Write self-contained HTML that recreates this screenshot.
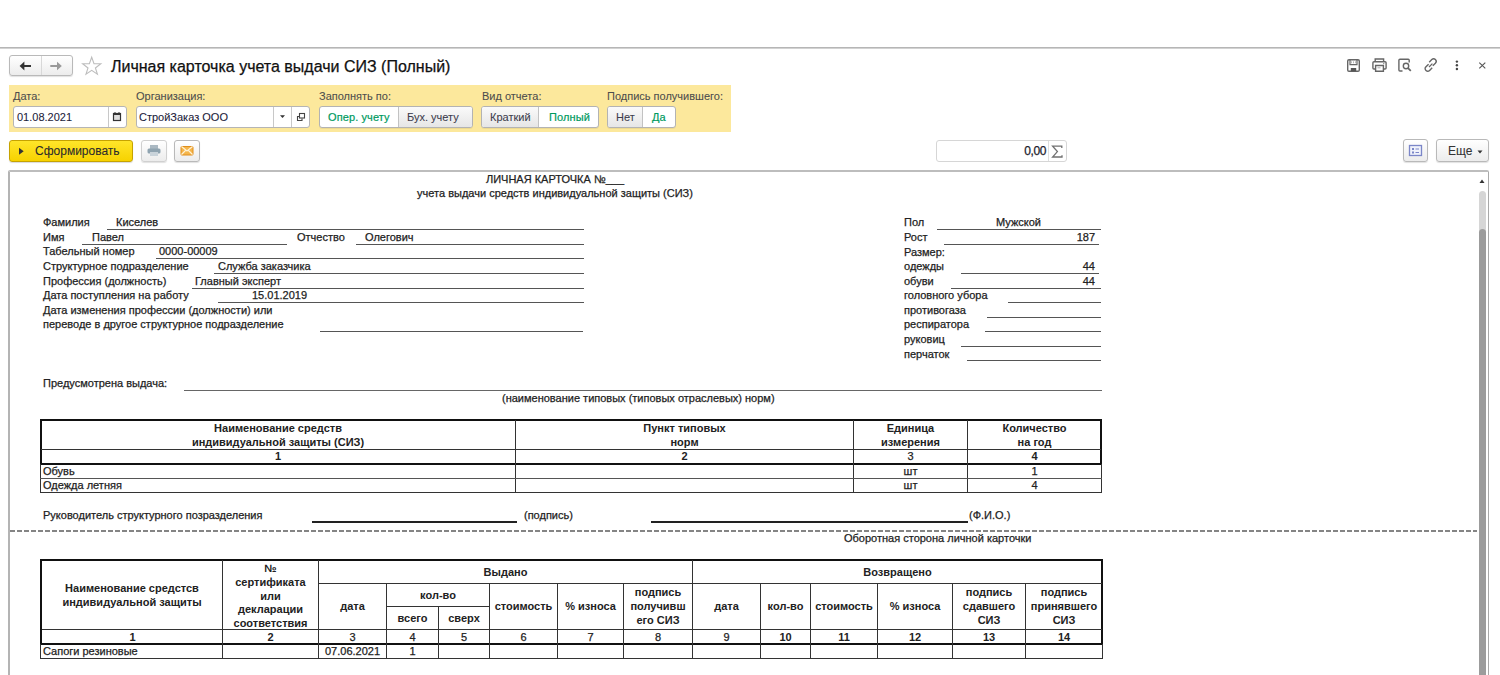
<!DOCTYPE html>
<html><head><meta charset="utf-8"><style>
html,body{margin:0;padding:0;background:#fff;}
body{width:1500px;height:675px;overflow:hidden;position:relative;font-family:"Liberation Sans",sans-serif;color:#222;}
.t11,.t12,.t16,.t10{position:absolute;white-space:pre;-webkit-text-stroke:0.25px currentColor;}
.t11{font-size:11px;line-height:13px;}
.t12{font-size:12px;line-height:14px;}
.t16{font-size:16px;line-height:18px;}
.t10{font-size:10px;line-height:12px;}
.ln{position:absolute;box-sizing:border-box;}
.btn{position:absolute;box-sizing:border-box;border:1px solid #b9b9b9;border-radius:3px;background:linear-gradient(#fff,#ececec);box-shadow:0 1px 1px rgba(0,0,0,.12);}
.inp{position:absolute;box-sizing:border-box;border:1px solid #b5b5b5;border-radius:3px;background:#fff;}
.lab{color:#4d4d4d;}
.sel{color:#009a5e;-webkit-text-stroke:0.2px currentColor !important;letter-spacing:0.1px;}
.rep{color:#1a1a1a;}
</style></head><body>
<div class="ln" style="left:0px;top:47px;width:1500px;height:1px;background:#b6b6b6"></div><div class="ln" style="left:0px;top:48px;width:1500px;height:1px;background:#d2d2d2"></div><div class="btn" style="left:9px;top:55px;width:64px;height:21px;"></div><div class="ln" style="left:41px;top:56px;width:1px;height:19px;background:#d8d8d8"></div><svg style="position:absolute;left:0;top:52px" width="110" height="28" viewBox="0 52 110 28">
<path d="M19.6 66 L24.4 61.6 V70.4 Z" fill="#333"/><rect x="24" y="65" width="7" height="2" fill="#333"/>
<path d="M61.8 66 L57 61.8 V70.2 Z" fill="#999"/><rect x="50.3" y="65" width="7.2" height="2" fill="#999"/>
<path d="M91.7 57.2 L94 63.6 L100.8 63.8 L95.4 68 L97.4 74.2 L91.7 70.4 L86 74.2 L88 68 L82.6 63.8 L89.4 63.6 Z" fill="none" stroke="#bdbdbd" stroke-width="1.1"/>
</svg><div class="t16 " style="left:111px;top:58px;color:#111;">Личная карточка учета выдачи СИЗ (Полный)</div><svg style="position:absolute;left:1340px;top:52px" width="160" height="28" viewBox="1340 52 160 28" fill="none" stroke="#666" stroke-width="1.4">
<path d="M1347.7 61 Q1347.7 59.7 1349 59.7 H1358 Q1359.3 59.7 1359.3 61 V70 Q1359.3 71.2 1358 71.2 H1349 Q1347.7 71.2 1347.7 70 Z"/>
<path d="M1350 59.7 V64.6 H1357 V59.7" stroke-width="1.2"/>
<path d="M1351.5 61.3 V63.3 M1353.5 61.3 V63.3 M1355.5 61.3 V63.3" stroke="#aaa" stroke-width="0.8"/>
<rect x="1350.8" y="68" width="5.4" height="3.4" fill="#555" stroke="none"/>
<path d="M1375.2 62 V59 H1383.6 V62"/>
<path d="M1375 69 H1374 Q1372.9 69 1372.9 68 V62.8 Q1372.9 61.8 1374 61.8 H1385 Q1386.1 61.8 1386.1 62.8 V68 Q1386.1 69 1385 69 H1384"/>
<path d="M1375.6 65.5 H1383.4 V71.2 H1375.6 Z"/>
<path d="M1377.5 67.8 H1380.5" stroke-width="0.8" stroke="#999"/>
<circle cx="1383.8" cy="63.6" r="0.6" fill="#666" stroke="none"/>
<path d="M1402.5 71 H1400 Q1398.9 71 1398.9 70 V60.3 Q1398.9 59.3 1400 59.3 H1408.2 Q1409.2 59.3 1409.2 60.3 V62.5"/>
<circle cx="1406" cy="66" r="2.7"/>
<path d="M1408 68.2 L1410.8 70.8" stroke-width="1.8"/>
<path d="M1428.6 64.2 L1426 66.8 Q1424.2 68.6 1426 70.4 Q1427.8 72.2 1429.6 70.4 L1432.2 67.8"/>
<path d="M1432.8 65.8 L1435.4 63.2 Q1437.2 61.4 1435.4 59.6 Q1433.6 57.8 1431.8 59.6 L1429.2 62.2"/>
<path d="M1429 67 L1432.4 63.6" stroke-width="1.3"/>
<circle cx="1456.9" cy="61.6" r="1.2" fill="#444" stroke="none"/>
<circle cx="1456.9" cy="65.3" r="1.2" fill="#444" stroke="none"/>
<circle cx="1456.9" cy="69" r="1.2" fill="#444" stroke="none"/>
<path d="M1479.3 62.6 L1485.3 68.4 M1485.3 62.6 L1479.3 68.4" stroke="#555" stroke-width="1.1"/>
</svg><div class="ln" style="left:9px;top:85px;width:722px;height:47px;background:#fce89c;"></div><div class="t11 lab" style="left:13px;top:90px;-webkit-text-stroke:0.08px currentColor;">Дата:</div><div class="t11 lab" style="left:136px;top:90px;-webkit-text-stroke:0.08px currentColor;">Организация:</div><div class="t11 lab" style="left:319px;top:90px;-webkit-text-stroke:0.08px currentColor;">Заполнять по:</div><div class="t11 lab" style="left:482px;top:90px;-webkit-text-stroke:0.08px currentColor;">Вид отчета:</div><div class="t11 lab" style="left:607px;top:90px;-webkit-text-stroke:0.08px currentColor;">Подпись получившего:</div><div class="inp" style="left:13px;top:106px;width:114px;height:22px;"></div><div class="ln" style="left:108px;top:107px;width:1px;height:20px;background:#c8c8c8"></div><div class="t11 " style="left:17px;top:111px;color:#1b1b3a;-webkit-text-stroke:0.08px currentColor;">01.08.2021</div><svg style="position:absolute;left:112px;top:111px" width="10" height="11" viewBox="0 0 10 11"><rect x="1.5" y="2.5" width="7" height="7" fill="#ddd" stroke="#333" stroke-width="1.2"/><rect x="1" y="2" width="8" height="2" fill="#333"/><rect x="2.5" y="1" width="1" height="1.5" fill="#333"/><rect x="6.5" y="1" width="1" height="1.5" fill="#333"/></svg><div class="inp" style="left:136px;top:106px;width:174px;height:22px;"></div><div class="ln" style="left:273px;top:107px;width:1px;height:20px;background:#c8c8c8"></div><div class="ln" style="left:291px;top:107px;width:1px;height:20px;background:#c8c8c8"></div><div class="t11 " style="left:139px;top:111px;color:#1b1b3a;-webkit-text-stroke:0.08px currentColor;">СтройЗаказ ООО</div><svg style="position:absolute;left:279px;top:114px" width="7" height="5" viewBox="0 0 7 5"><path d="M1 1.2 H6 L3.5 4 Z" fill="#333"/></svg><svg style="position:absolute;left:295px;top:111px" width="11" height="11" viewBox="0 0 11 11" fill="none" stroke="#444" stroke-width="1.1"><rect x="4.5" y="2.5" width="5" height="4.5"/><path d="M4 5.5 H2.5 V9.5 H7 V7.5"/></svg><div class="inp" style="left:319px;top:106px;width:154px;height:22px;border-color:#b3b3b3;box-shadow:0 1px 0 rgba(0,0,0,.06)"></div><div class="ln" style="left:398px;top:107px;width:74px;height:20px;background:linear-gradient(#fafafa,#e6e6e6);border-radius:0 2px 2px 0;"></div><div class="ln" style="left:398px;top:107px;width:1px;height:20px;background:#c2c2c2"></div><div class="t11 sel" style="left:328px;top:111px;-webkit-text-stroke:0.08px currentColor;">Опер. учету</div><div class="t11 " style="left:407px;top:111px;color:#3d3d4d;-webkit-text-stroke:0.08px currentColor;">Бух. учету</div><div class="inp" style="left:481px;top:106px;width:118px;height:22px;border-color:#b3b3b3;box-shadow:0 1px 0 rgba(0,0,0,.06)"></div><div class="ln" style="left:482px;top:107px;width:56px;height:20px;background:linear-gradient(#fafafa,#e6e6e6);border-radius:2px 0 0 2px;"></div><div class="ln" style="left:538px;top:107px;width:1px;height:20px;background:#c2c2c2"></div><div class="t11 " style="left:490px;top:111px;color:#3d3d4d;-webkit-text-stroke:0.08px currentColor;">Краткий</div><div class="t11 sel" style="left:549px;top:111px;-webkit-text-stroke:0.08px currentColor;">Полный</div><div class="inp" style="left:607px;top:106px;width:69px;height:22px;border-color:#b3b3b3;box-shadow:0 1px 0 rgba(0,0,0,.06)"></div><div class="ln" style="left:608px;top:107px;width:34px;height:20px;background:linear-gradient(#fafafa,#e6e6e6);border-radius:2px 0 0 2px;"></div><div class="ln" style="left:642px;top:107px;width:1px;height:20px;background:#c2c2c2"></div><div class="t11 " style="left:616px;top:111px;color:#3d3d4d;-webkit-text-stroke:0.08px currentColor;">Нет</div><div class="t11 sel" style="left:652px;top:111px;-webkit-text-stroke:0.08px currentColor;">Да</div><div class="ln" style="left:9px;top:140px;width:124px;height:22px;border:1px solid #c6a300;border-radius:3px;background:linear-gradient(#ffe52a,#f7d200);box-shadow:0 1px 1px rgba(0,0,0,.15)"></div><svg style="position:absolute;left:18px;top:147px" width="7" height="9" viewBox="0 0 7 9"><path d="M1 0.7 L5.7 4.2 L1 7.7 Z" fill="#333"/></svg><div class="t12 " style="left:35px;top:144px;color:#2b2b2b;-webkit-text-stroke:0.08px currentColor;">Сформировать</div><div class="btn" style="left:141px;top:140px;width:26px;height:22px;border-color:#d0d0d0"></div><svg style="position:absolute;left:146px;top:144px" width="16" height="13" viewBox="0 0 16 13"><rect x="4" y="1" width="8" height="4" fill="#aab8c2"/><rect x="1.5" y="4.5" width="13" height="5" rx="1.5" fill="#8fa3b0"/><rect x="4" y="8" width="8" height="4" fill="#c9d3da"/></svg><div class="btn" style="left:174px;top:140px;width:26px;height:22px;"></div><svg style="position:absolute;left:180px;top:145px" width="14" height="11" viewBox="0 0 14 11"><rect x="1" y="1.5" width="12" height="8.5" rx="0.8" fill="#f5b54a" stroke="#e08e1c" stroke-width="1"/><path d="M1.5 1.5 L7 6 L12.5 1.5 M1.5 9.5 L5.5 5.5 M12.5 9.5 L8.5 5.5" stroke="#fff3d6" stroke-width="1.1" fill="none"/></svg><div class="inp" style="left:936px;top:140px;width:131px;height:22px;border-color:#d6d6d6;"></div><div class="ln" style="left:1048px;top:141px;width:1px;height:20px;background:#dedede"></div><div class="t12" style="right:454px;top:144px;letter-spacing:-0.4px;color:#1c1c2c">0,00</div><svg style="position:absolute;left:1048px;top:140px" width="20" height="22" viewBox="1048 140 20 22"><path d="M1061.8 148 V146.2 H1052.6 L1057.4 151.6 L1052.6 157 H1062 V155.2" fill="none" stroke="#707070" stroke-width="1.3" stroke-linejoin="miter"/></svg><div class="btn" style="left:1403px;top:139px;width:25px;height:23px;"></div><svg style="position:absolute;left:1408px;top:144px" width="15" height="13" viewBox="0 0 15 13"><rect x="1.5" y="1.5" width="12" height="10" fill="#f0f2fb" stroke="#7b86c8" stroke-width="1.3"/><rect x="4" y="4" width="2" height="2" fill="#7b86c8"/><rect x="4" y="7.5" width="2" height="2" fill="#7b86c8"/><path d="M7.5 5 H11 M7.5 8.5 H11" stroke="#7b86c8" stroke-width="1.1"/></svg><div class="btn" style="left:1436px;top:139px;width:53px;height:23px;"></div><div class="t12 " style="left:1448px;top:144px;color:#333;-webkit-text-stroke:0.08px currentColor;">Еще</div><svg style="position:absolute;left:1477px;top:150px" width="6" height="4" viewBox="0 0 6 4"><path d="M0.5 0.5 H5.5 L3 3.5 Z" fill="#333"/></svg><div class="ln" style="left:8px;top:170px;width:1481px;height:520px;border:1px solid #a9a9a9;border-left:2px solid #b4b4b4;border-top:2px solid #bdbdbd;border-radius:2px 2px 0 0;"></div><svg style="position:absolute;left:1478px;top:178px" width="8" height="6" viewBox="0 0 8 6"><path d="M1.5 5 H6.5 L4 1.5 Z" fill="#333"/></svg><div class="ln" style="left:1479px;top:191px;width:7px;height:509px;background:#d6d6d6;border-radius:3.5px 3.5px 0 0;"></div><div class="ln" style="left:1479px;top:229px;width:7px;height:471px;background:#9c9c9c;border-radius:3.5px 3.5px 0 0;"></div><div class="t11" style="left:414px;width:282px;top:173px;text-align:center;">ЛИЧНАЯ КАРТОЧКА №___</div><div class="t11" style="left:414px;width:282px;top:187px;text-align:center;">учета выдачи средств индивидуальной защиты (СИЗ)</div><div class="t11 " style="left:43px;top:216px;">Фамилия</div><div class="ln" style="left:107px;top:229px;width:477px;height:1px;background:#555"></div><div class="t11 " style="left:116px;top:216px;">Киселев</div><div class="t11 " style="left:43px;top:231px;">Имя</div><div class="ln" style="left:82px;top:244px;width:205px;height:1px;background:#555"></div><div class="t11 " style="left:92px;top:231px;">Павел</div><div class="t11 " style="left:297px;top:231px;">Отчество</div><div class="ln" style="left:356px;top:244px;width:228px;height:1px;background:#555"></div><div class="t11 " style="left:365px;top:231px;">Олегович</div><div class="t11 " style="left:43px;top:245px;">Табельный номер</div><div class="ln" style="left:156px;top:258px;width:428px;height:1px;background:#555"></div><div class="t11 " style="left:159px;top:245px;">0000-00009</div><div class="t11 " style="left:43px;top:260px;">Структурное подразделение</div><div class="ln" style="left:214px;top:273px;width:370px;height:1px;background:#555"></div><div class="t11 " style="left:218px;top:260px;">Служба заказчика</div><div class="t11 " style="left:43px;top:275px;">Профессия (должность)</div><div class="ln" style="left:192px;top:288px;width:392px;height:1px;background:#555"></div><div class="t11 " style="left:195px;top:275px;">Главный эксперт</div><div class="t11 " style="left:43px;top:289px;">Дата поступления на работу</div><div class="ln" style="left:218px;top:302px;width:366px;height:1px;background:#555"></div><div class="t11 " style="left:252px;top:289px;">15.01.2019</div><div class="t11 " style="left:43px;top:304px;">Дата изменения профессии (должности) или</div><div class="t11 " style="left:43px;top:318px;">переводе в другое структурное подразделение</div><div class="ln" style="left:320px;top:331px;width:263px;height:1px;background:#555"></div><div class="t11 " style="left:904px;top:216px;">Пол</div><div class="ln" style="left:937px;top:229px;width:164px;height:1px;background:#555"></div><div class="t11 " style="left:996px;top:216px;">Мужской</div><div class="t11 " style="left:904px;top:231px;">Рост</div><div class="ln" style="left:944px;top:244px;width:155px;height:1px;background:#555"></div><div class="t11" style="right:405px;top:231px;text-align:right;">187</div><div class="t11 " style="left:904px;top:246px;">Размер:</div><div class="t11 " style="left:904px;top:260px;">одежды</div><div class="ln" style="left:961px;top:273px;width:138px;height:1px;background:#555"></div><div class="t11" style="right:405px;top:260px;text-align:right;">44</div><div class="t11 " style="left:904px;top:275px;">обуви</div><div class="ln" style="left:951px;top:288px;width:150px;height:1px;background:#555"></div><div class="t11" style="right:405px;top:275px;text-align:right;">44</div><div class="t11 " style="left:904px;top:289px;">головного убора</div><div class="ln" style="left:1008px;top:302px;width:93px;height:1px;background:#555"></div><div class="t11 " style="left:904px;top:304px;">противогаза</div><div class="ln" style="left:987px;top:317px;width:114px;height:1px;background:#555"></div><div class="t11 " style="left:904px;top:318px;">респиратора</div><div class="ln" style="left:985px;top:331px;width:116px;height:1px;background:#555"></div><div class="t11 " style="left:904px;top:333px;">руковиц</div><div class="ln" style="left:961px;top:346px;width:140px;height:1px;background:#555"></div><div class="t11 " style="left:904px;top:348px;">перчаток</div><div class="ln" style="left:967px;top:360px;width:134px;height:1px;background:#555"></div><div class="t11 " style="left:43px;top:377px;">Предусмотрена выдача:</div><div class="ln" style="left:184px;top:390px;width:918px;height:1px;background:#666"></div><div class="t11 " style="left:502px;top:392px;">(наименование типовых (типовых отраслевых) норм)</div><div class="ln" style="left:40px;top:419px;width:1062px;height:46px;border:2px solid #111;"></div><div class="ln" style="left:41px;top:449px;width:1060px;height:1px;background:#333"></div><div class="ln" style="left:515px;top:420px;width:1px;height:73px;background:#333"></div><div class="ln" style="left:853px;top:420px;width:1px;height:73px;background:#333"></div><div class="ln" style="left:967px;top:420px;width:1px;height:73px;background:#333"></div><div class="ln" style="left:40px;top:464px;width:1px;height:29px;background:#333"></div><div class="ln" style="left:1101px;top:464px;width:1px;height:29px;background:#333"></div><div class="ln" style="left:40px;top:478px;width:1062px;height:1px;background:#555"></div><div class="ln" style="left:40px;top:492px;width:1062px;height:1px;background:#333"></div><div class="t11" style="left:41px;width:474px;top:422px;text-align:center;font-weight:bold;-webkit-text-stroke:0;">Наименование средств</div><div class="t11" style="left:41px;width:474px;top:436px;text-align:center;font-weight:bold;-webkit-text-stroke:0;">индивидуальной защиты (СИЗ)</div><div class="t11" style="left:41px;width:474px;top:450px;text-align:center;font-weight:bold;-webkit-text-stroke:0;">1</div><div class="t11" style="left:516px;width:337px;top:422px;text-align:center;font-weight:bold;-webkit-text-stroke:0;">Пункт типовых</div><div class="t11" style="left:516px;width:337px;top:436px;text-align:center;font-weight:bold;-webkit-text-stroke:0;">норм</div><div class="t11" style="left:516px;width:337px;top:450px;text-align:center;font-weight:bold;-webkit-text-stroke:0;">2</div><div class="t11" style="left:854px;width:113px;top:422px;text-align:center;font-weight:bold;-webkit-text-stroke:0;">Единица</div><div class="t11" style="left:854px;width:113px;top:436px;text-align:center;font-weight:bold;-webkit-text-stroke:0;">измерения</div><div class="t11" style="left:854px;width:113px;top:450px;text-align:center;">3</div><div class="t11" style="left:968px;width:133px;top:422px;text-align:center;font-weight:bold;-webkit-text-stroke:0;">Количество</div><div class="t11" style="left:968px;width:133px;top:436px;text-align:center;font-weight:bold;-webkit-text-stroke:0;">на год</div><div class="t11" style="left:968px;width:133px;top:450px;text-align:center;font-weight:bold;-webkit-text-stroke:0;">4</div><div class="t11 " style="left:43px;top:465px;">Обувь</div><div class="t11 " style="left:43px;top:479px;">Одежда летняя</div><div class="t11" style="left:854px;width:113px;top:465px;text-align:center;">шт</div><div class="t11" style="left:968px;width:133px;top:465px;text-align:center;">1</div><div class="t11" style="left:854px;width:113px;top:479px;text-align:center;">шт</div><div class="t11" style="left:968px;width:133px;top:479px;text-align:center;">4</div><div class="t11 " style="left:43px;top:509px;">Руководитель структурного позразделения</div><div class="ln" style="left:312px;top:521px;width:205px;height:2px;background:#222"></div><div class="t11 " style="left:524px;top:509px;">(подпись)</div><div class="ln" style="left:651px;top:521px;width:317px;height:2px;background:#222"></div><div class="t11 " style="left:969px;top:509px;">(Ф.И.О.)</div><div class="ln" style="left:10px;top:530px;width:1467px;height:2px;opacity:.8;background:repeating-linear-gradient(90deg,#666 0 5px,transparent 5px 7px)"></div><div class="t11 " style="left:844px;top:532px;">Оборотная сторона личной карточки</div><div class="ln" style="left:40px;top:559px;width:1063px;height:86px;border-top:2px solid #111;border-left:2px solid #111;border-right:2px solid #111;border-bottom:2px solid #111;"></div><div class="ln" style="left:40px;top:644px;width:1px;height:15px;background:#333"></div><div class="ln" style="left:1102px;top:644px;width:1px;height:15px;background:#333"></div><div class="ln" style="left:40px;top:658px;width:1063px;height:1px;background:#333"></div><div class="ln" style="left:318px;top:583px;width:784px;height:1px;background:#333"></div><div class="ln" style="left:386px;top:606px;width:104px;height:1px;background:#333"></div><div class="ln" style="left:42px;top:629px;width:1060px;height:1px;background:#333"></div><div class="ln" style="left:222px;top:560px;width:1px;height:99px;background:#333"></div><div class="ln" style="left:318px;top:560px;width:1px;height:99px;background:#333"></div><div class="ln" style="left:692px;top:560px;width:1px;height:99px;background:#333"></div><div class="ln" style="left:386px;top:583px;width:1px;height:76px;background:#333"></div><div class="ln" style="left:489px;top:583px;width:1px;height:76px;background:#333"></div><div class="ln" style="left:557px;top:583px;width:1px;height:76px;background:#333"></div><div class="ln" style="left:623px;top:583px;width:1px;height:76px;background:#333"></div><div class="ln" style="left:760px;top:583px;width:1px;height:76px;background:#333"></div><div class="ln" style="left:810px;top:583px;width:1px;height:76px;background:#333"></div><div class="ln" style="left:877px;top:583px;width:1px;height:76px;background:#333"></div><div class="ln" style="left:952px;top:583px;width:1px;height:76px;background:#333"></div><div class="ln" style="left:1025px;top:583px;width:1px;height:76px;background:#333"></div><div class="ln" style="left:438px;top:606px;width:1px;height:53px;background:#333"></div><div class="t11" style="left:42px;width:180px;top:582px;text-align:center;font-weight:bold;-webkit-text-stroke:0;">Наименование средстсв</div><div class="t11" style="left:42px;width:180px;top:596px;text-align:center;font-weight:bold;-webkit-text-stroke:0;">индивидуальной защиты</div><div class="t11" style="left:223px;width:95px;top:562px;text-align:center;font-weight:bold;-webkit-text-stroke:0;">№</div><div class="t11" style="left:223px;width:95px;top:576px;text-align:center;font-weight:bold;-webkit-text-stroke:0;">сертификата</div><div class="t11" style="left:223px;width:95px;top:590px;text-align:center;font-weight:bold;-webkit-text-stroke:0;">или</div><div class="t11" style="left:223px;width:95px;top:603px;text-align:center;font-weight:bold;-webkit-text-stroke:0;">декларации</div><div class="t11" style="left:223px;width:95px;top:617px;text-align:center;font-weight:bold;-webkit-text-stroke:0;">соответствия</div><div class="t11" style="left:319px;width:373px;top:566px;text-align:center;font-weight:bold;-webkit-text-stroke:0;">Выдано</div><div class="t11" style="left:693px;width:409px;top:566px;text-align:center;font-weight:bold;-webkit-text-stroke:0;">Возвращено</div><div class="t11" style="left:319px;width:67px;top:600px;text-align:center;font-weight:bold;-webkit-text-stroke:0;">дата</div><div class="t11" style="left:387px;width:102px;top:589px;text-align:center;font-weight:bold;-webkit-text-stroke:0;">кол-во</div><div class="t11" style="left:387px;width:51px;top:612px;text-align:center;font-weight:bold;-webkit-text-stroke:0;">всего</div><div class="t11" style="left:439px;width:50px;top:612px;text-align:center;font-weight:bold;-webkit-text-stroke:0;">сверх</div><div class="t11" style="left:490px;width:67px;top:600px;text-align:center;font-weight:bold;-webkit-text-stroke:0;">стоимость</div><div class="t11" style="left:558px;width:65px;top:600px;text-align:center;font-weight:bold;-webkit-text-stroke:0;">% износа</div><div class="t11" style="left:624px;width:68px;top:586px;text-align:center;font-weight:bold;-webkit-text-stroke:0;">подпись</div><div class="t11" style="left:624px;width:68px;top:600px;text-align:center;font-weight:bold;-webkit-text-stroke:0;">получивш</div><div class="t11" style="left:624px;width:68px;top:614px;text-align:center;font-weight:bold;-webkit-text-stroke:0;">его СИЗ</div><div class="t11" style="left:693px;width:67px;top:600px;text-align:center;font-weight:bold;-webkit-text-stroke:0;">дата</div><div class="t11" style="left:761px;width:49px;top:600px;text-align:center;font-weight:bold;-webkit-text-stroke:0;">кол-во</div><div class="t11" style="left:811px;width:66px;top:600px;text-align:center;font-weight:bold;-webkit-text-stroke:0;">стоимость</div><div class="t11" style="left:878px;width:74px;top:600px;text-align:center;font-weight:bold;-webkit-text-stroke:0;">% износа</div><div class="t11" style="left:953px;width:72px;top:586px;text-align:center;font-weight:bold;-webkit-text-stroke:0;">подпись</div><div class="t11" style="left:953px;width:72px;top:600px;text-align:center;font-weight:bold;-webkit-text-stroke:0;">сдавшего</div><div class="t11" style="left:953px;width:72px;top:614px;text-align:center;font-weight:bold;-webkit-text-stroke:0;">СИЗ</div><div class="t11" style="left:1026px;width:76px;top:586px;text-align:center;font-weight:bold;-webkit-text-stroke:0;">подпись</div><div class="t11" style="left:1026px;width:76px;top:600px;text-align:center;font-weight:bold;-webkit-text-stroke:0;">принявшего</div><div class="t11" style="left:1026px;width:76px;top:614px;text-align:center;font-weight:bold;-webkit-text-stroke:0;">СИЗ</div><div class="t11" style="left:43px;width:179px;top:631px;text-align:center;font-weight:bold;-webkit-text-stroke:0;">1</div><div class="t11" style="left:223px;width:95px;top:631px;text-align:center;font-weight:bold;-webkit-text-stroke:0;">2</div><div class="t11" style="left:319px;width:67px;top:631px;text-align:center;">3</div><div class="t11" style="left:387px;width:51px;top:631px;text-align:center;">4</div><div class="t11" style="left:439px;width:50px;top:631px;text-align:center;">5</div><div class="t11" style="left:490px;width:67px;top:631px;text-align:center;">6</div><div class="t11" style="left:558px;width:65px;top:631px;text-align:center;">7</div><div class="t11" style="left:624px;width:68px;top:631px;text-align:center;">8</div><div class="t11" style="left:693px;width:67px;top:631px;text-align:center;">9</div><div class="t11" style="left:761px;width:49px;top:631px;text-align:center;font-weight:bold;-webkit-text-stroke:0;">10</div><div class="t11" style="left:811px;width:66px;top:631px;text-align:center;font-weight:bold;-webkit-text-stroke:0;">11</div><div class="t11" style="left:878px;width:74px;top:631px;text-align:center;font-weight:bold;-webkit-text-stroke:0;">12</div><div class="t11" style="left:953px;width:72px;top:631px;text-align:center;font-weight:bold;-webkit-text-stroke:0;">13</div><div class="t11" style="left:1026px;width:76px;top:631px;text-align:center;font-weight:bold;-webkit-text-stroke:0;">14</div><div class="t11 " style="left:43px;top:645px;">Сапоги резиновые</div><div class="t11" style="left:319px;width:67px;top:645px;text-align:center;">07.06.2021</div><div class="t11" style="left:387px;width:51px;top:645px;text-align:center;">1</div></body></html>
